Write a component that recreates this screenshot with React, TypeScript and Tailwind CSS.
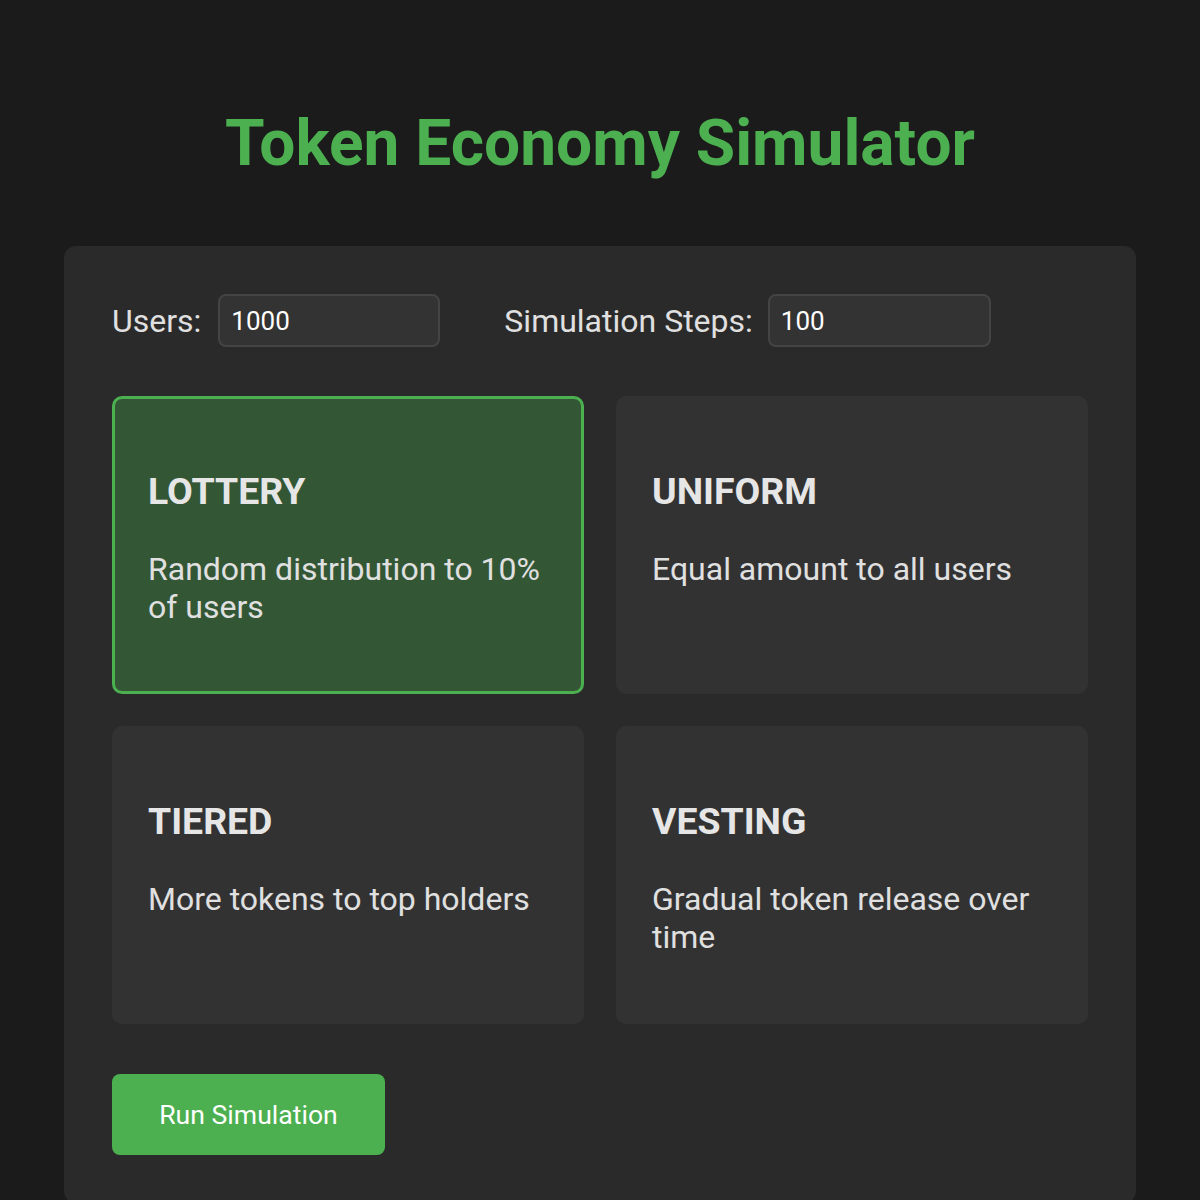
const strategies = [
  { name: "LOTTERY", desc: "Random distribution to 10% of users", active: true },
  { name: "UNIFORM", desc: "Equal amount to all users", active: false },
  { name: "TIERED", desc: "More tokens to top holders", active: false },
  { name: "VESTING", desc: "Gradual token release over time", active: false },
];

export default function App() {
  return (
    <div
      className="min-h-screen bg-[#1b1b1b] text-[#e0e0e0] px-16 pt-[104px]"
      style={{ fontFamily: "Roboto, 'Liberation Sans', sans-serif" }}
    >
      {/* Title */}
      <h1 className="text-center text-[64px] leading-[80px] font-bold text-[#4caf50]">
        Token Economy Simulator
      </h1>

      {/* Panel */}
      <div className="mt-[62px] bg-[#2a2a2a] rounded-xl px-12 pt-12 pb-12">
        {/* Inputs */}
        <div className="flex items-center h-[53px]">
          <label className="text-[32px] mr-[17px]">Users:</label>
          <input
            defaultValue="1000"
            className="w-[222px] h-[53px] px-[11px] text-[26px] text-white bg-[#333] border-2 border-[#444] rounded-lg outline-none"
          />
          <label className="text-[32px] ml-[64px] mr-[15px]">Simulation Steps:</label>
          <input
            defaultValue="100"
            className="w-[223px] h-[53px] px-[11px] text-[26px] text-white bg-[#333] border-2 border-[#444] rounded-lg outline-none"
          />
        </div>

        {/* Strategy cards */}
        <div className="grid grid-cols-2 gap-8 mt-[49px]">
          {strategies.map((s) => (
            <div
              key={s.name}
              className={
                s.active
                  ? "h-[298px] rounded-[10px] border-[3px] border-[#4caf50] bg-[#335635] px-[33px] pt-[70px]"
                  : "h-[298px] rounded-[10px] border-[3px] border-transparent bg-[#323232] px-[33px] pt-[70px]"
              }
            >
              <h3 className="text-[37.4px] leading-[44px] font-bold text-[#e6e6e6]">{s.name}</h3>
              <p className="mt-[37px] text-[32px] leading-[38px] text-[#e0e0e0]">{s.desc}</p>
            </div>
          ))}
        </div>

        {/* Run */}
        <button className="mt-[50px] w-[273px] h-[81px] rounded-lg bg-[#4caf50] text-white text-[26.6px]">
          Run Simulation
        </button>
      </div>
    </div>
  );
}
